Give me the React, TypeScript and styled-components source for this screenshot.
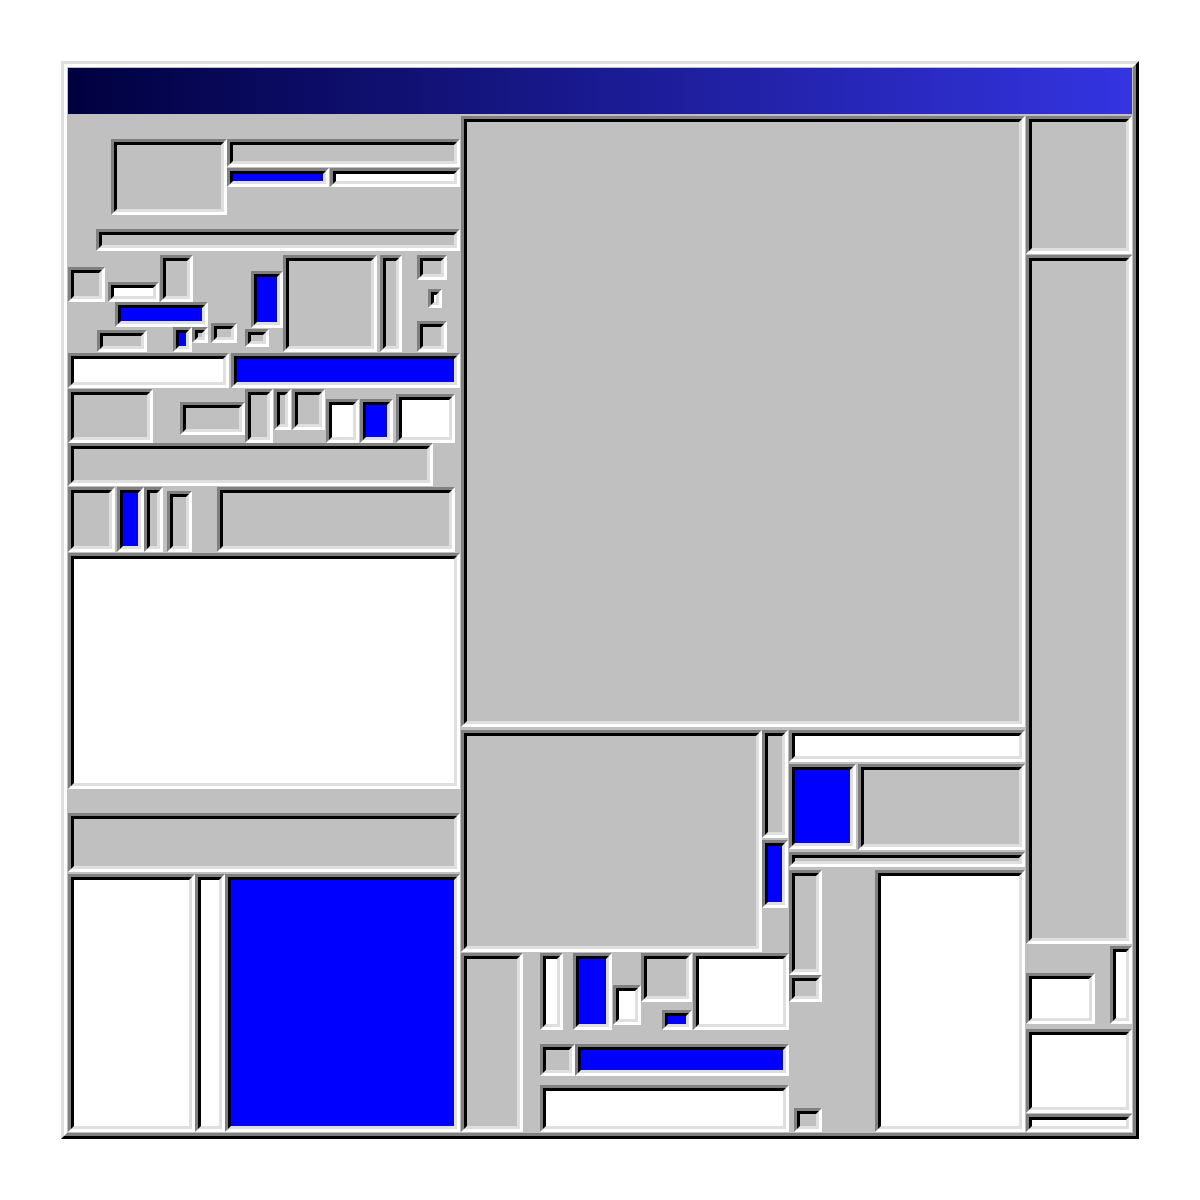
import React from "react";
import styled, { createGlobalStyle } from "styled-components";

const GlobalStyle = createGlobalStyle`
  html, body {
    margin: 0;
    padding: 0;
    background: #ffffff;
  }
  body {
    font-family: "Liberation Sans", Arial, sans-serif;
  }
`;

type Fill = "gray" | "blue" | "white";

const fills: Record<Fill, string> = {
  gray: "#c0c0c0",
  blue: "#0000ff",
  white: "#ffffff",
};

interface BoxProps {
  $w?: number;
  $h?: number;
  $mt?: number | "auto";
  $ml?: number;
}

const px = (v?: number | string) => (typeof v === "number" ? `${v}px` : v);

const sizing = (p: BoxProps) => `
  ${p.$w !== undefined ? `width: ${p.$w}px;` : ""}
  ${p.$h !== undefined ? `height: ${p.$h}px;` : ""}
  ${p.$mt !== undefined ? `margin-top: ${px(p.$mt)};` : ""}
  ${p.$ml !== undefined ? `margin-left: ${p.$ml}px;` : ""}
`;

const Page = styled.div`
  padding: 61px;
`;

// raised outer frame, two bevel bands
const Window = styled.div`
  position: relative;
  box-sizing: border-box;
  width: 1078px;
  height: 1078px;
  padding: 4px;
  background: #c0c0c0;
  border: 3px solid;
  border-color: #dfdfdf #000000 #000000 #dfdfdf;

  &::before {
    content: "";
    position: absolute;
    inset: 0;
    border: 3px solid;
    border-color: #ffffff #808080 #808080 #ffffff;
    pointer-events: none;
  }
`;

const TitleBar = styled.div`
  height: 46px;
  background: linear-gradient(to right, #000040, #3434e2);
`;

const Panes = styled.div`
  display: flex;
  gap: 1px;
  margin-top: 2px;
  height: 1016px;
`;

const Stack = styled.div<BoxProps>`
  display: flex;
  flex-direction: column;
  flex: none;
  ${sizing}
`;

const Strip = styled.div<BoxProps & { $align?: string; $justify?: string }>`
  display: flex;
  flex: none;
  align-items: ${(p) => p.$align ?? "flex-start"};
  justify-content: ${(p) => p.$justify ?? "flex-start"};
  ${sizing}
`;

// sunken field
const Well = styled.div<BoxProps & { $fill?: Fill }>`
  position: relative;
  box-sizing: border-box;
  flex: none;
  ${sizing}
  background: ${(p) => fills[p.$fill ?? "gray"]};
  border: 3px solid;
  border-color: #808080 #ffffff #ffffff #808080;

  &::before {
    content: "";
    position: absolute;
    inset: 0;
    border: 3px solid;
    border-color: #000000 #dfdfdf #dfdfdf #000000;
    pointer-events: none;
  }
`;

const LeftPane = () => (
  <Stack $w={392}>
    <Stack $h={236}>
      <Strip $mt={23} $ml={43}>
        <Well $w={116} $h={76} />
        <Stack $w={233}>
          <Well $h={28} />
          <Strip $mt={1}>
            <Well $w={102} $h={19} $fill="blue" />
            <Well $w={130} $h={19} $ml={1} $fill="white" />
          </Strip>
        </Stack>
      </Strip>
      <Well $mt={14} $ml={28} $w={364} $h={22} />
      <Strip $mt={4} $h={97}>
        <Stack $w={141}>
          <Strip $h={47} $align="flex-end">
            <Well $w={37} $h={35} />
            <Well $w={51} $h={20} $ml={3} $fill="white" />
            <Well $w={33} $h={47} $ml={1} />
          </Strip>
          <Well $w={93} $h={25} $ml={47} $fill="blue" />
          <Strip $h={25}>
            <Well $w={50} $h={22} $ml={29} $mt={3} />
            <Well $w={19} $h={25} $ml={26} $fill="blue" />
            <Well $w={16} $h={16} />
          </Strip>
        </Stack>
        <Stack $w={36}>
          <Well $w={26} $h={20} $mt={68} $ml={2} />
        </Stack>
        <Stack $w={38}>
          <Well $w={32} $h={57} $mt={16} $ml={6} $fill="blue" />
          <Well $w={24} $h={18} $mt={1} />
        </Stack>
        <Well $w={94} $h={97} />
        <Well $w={22} $h={97} $ml={3} />
        <Stack $w={30} $ml={15}>
          <Well $h={25} />
          <Well $w={14} $h={19} $mt={9} $ml={11} $fill="white" />
          <Well $h={31} $mt={13} />
        </Stack>
      </Strip>
    </Stack>

    <Strip $mt={1}>
      <Well $w={161} $h={35} $fill="white" />
      <Well $w={229} $h={35} $ml={2} $fill="blue" />
    </Strip>

    <Strip $mt={1} $h={54}>
      <Well $w={85} $h={54} />
      <Well $w={65} $h={33} $ml={27} $mt={13} />
      <Well $w={28} $h={54} />
      <Well $w={17} $h={41} $ml={1} />
      <Well $w={33} $h={41} $ml={1} />
      <Well $w={33} $h={44} $ml={1} $mt={10} $fill="white" />
      <Well $w={33} $h={44} $ml={1} $mt={10} $fill="blue" />
      <Well $w={59} $h={49} $ml={3} $mt={5} $fill="white" />
    </Strip>

    <Well $w={365} $h={43} />

    <Strip $mt={1} $h={65}>
      <Well $w={47} $h={65} />
      <Well $w={27} $h={65} $ml={2} $fill="blue" />
      <Well $w={19} $h={65} />
      <Well $w={25} $h={61} $ml={4} $mt={4} />
      <Well $w={238} $h={65} $ml={25} />
    </Strip>

    <Well $mt={1} $h={236} $fill="white" />
    <Well $mt={24} $h={59} />

    <Strip $mt={2} $h={258}>
      <Well $w={127} $h={258} $fill="white" />
      <Well $w={30} $h={258} $fill="white" />
      <Well $w={235} $h={258} $fill="blue" />
    </Strip>
  </Stack>
);

const MiddlePane = () => (
  <Stack $w={564}>
    <Well $h={611} />
    <Strip $mt={3} $h={402}>
      <Stack $w={328}>
        <Strip $h={222}>
          <Well $w={301} $h={222} />
          <Stack $w={26}>
            <Well $h={108} />
            <Well $h={68} $mt={2} $fill="blue" />
          </Stack>
        </Strip>
        <Strip $mt={1} $h={179}>
          <Well $w={62} $h={179} />
          <Stack $w={249} $ml={17}>
            <Strip $h={77}>
              <Well $w={23} $h={77} $fill="white" />
              <Well $w={39} $h={77} $ml={10} $fill="blue" />
              <Well $w={28} $h={40} $ml={1} $mt={32} $fill="white" />
              <Stack $w={52}>
                <Well $w={51} $h={49} />
                <Well $w={30} $h={20} $mt={8} $ml={21} $fill="blue" />
              </Stack>
              <Well $w={96} $h={77} $fill="white" />
            </Strip>
            <Strip $mt={14}>
              <Well $w={35} $h={32} />
              <Well $w={214} $h={32} $fill="blue" />
            </Strip>
            <Well $mt={9} $h={47} $fill="white" />
          </Stack>
        </Strip>
      </Stack>

      <Stack $w={236}>
        <Well $h={32} $fill="white" />
        <Strip $mt={2}>
          <Well $w={67} $h={85} $fill="blue" />
          <Well $w={167} $h={86} $ml={2} />
        </Strip>
        <Well $mt={2} $h={15} />
        <Strip $mt={3} $h={262}>
          <Stack $w={33} $h={262}>
            <Well $h={105} />
            <Well $h={27} />
            <Well $w={28} $h={24} $mt="auto" $ml={5} />
          </Stack>
          <Well $w={150} $h={262} $ml={53} $fill="white" />
        </Strip>
      </Stack>
    </Strip>
  </Stack>
);

const RightPane = () => (
  <Stack $w={106}>
    <Well $h={138} />
    <Well $mt={1} $h={689} />
    <Strip $h={80} $align="flex-end" $justify="space-between">
      <Well $w={69} $h={51} $fill="white" />
      <Well $w={22} $h={78} $fill="white" />
    </Strip>
    <Well $mt={5} $h={84} $fill="white" />
    <Well $mt={1} $h={18} $fill="white" />
  </Stack>
);

export default function App() {
  return (
    <>
      <GlobalStyle />
      <Page>
        <Window>
          <TitleBar />
          <Panes>
            <LeftPane />
            <MiddlePane />
            <RightPane />
          </Panes>
        </Window>
      </Page>
    </>
  );
}
